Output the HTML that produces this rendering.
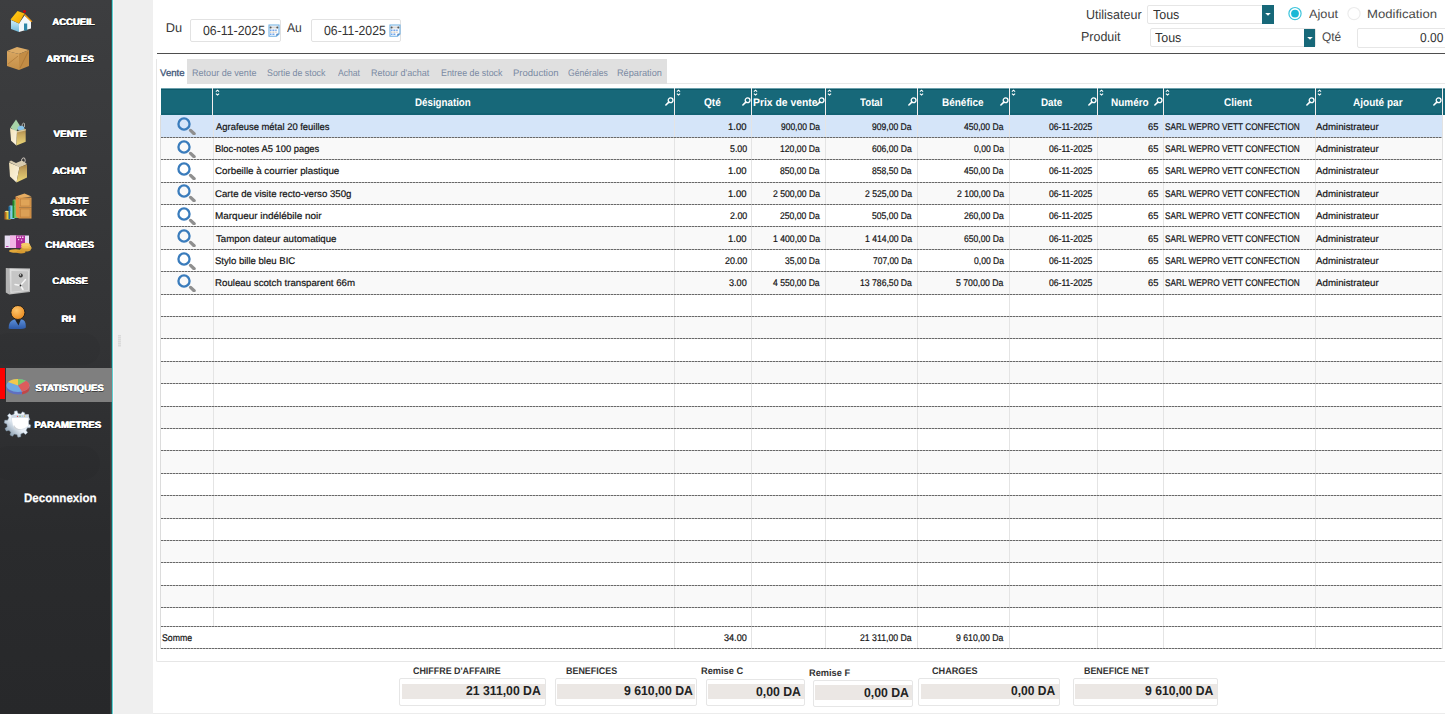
<!DOCTYPE html>
<html><head><meta charset="utf-8"><style>
html,body{margin:0;padding:0;}
body{width:1445px;height:714px;overflow:hidden;position:relative;background:#fff;font-family:"Liberation Sans", sans-serif;}
.t{position:absolute;white-space:nowrap;line-height:1;transform-origin:0 0;text-rendering:geometricPrecision;}
.dash{position:absolute;left:161px;width:1282px;height:1px;background:repeating-linear-gradient(90deg,#686868 0,#686868 2px,#b4b4b4 2px,#b4b4b4 3px);}
</style></head><body>
<div style="position:absolute;left:0;top:0;width:112px;height:714px;background:linear-gradient(180deg,#3d3e40 0%,#333436 45%,#2a2b2d 75%,#27282a 100%)"></div>
<div style="position:absolute;left:110px;top:0;width:1px;height:714px;background:#433838"></div>
<div style="position:absolute;left:111px;top:0;width:1px;height:714px;background:#235a5c"></div>
<div style="position:absolute;left:112px;top:0;width:1px;height:714px;background:#5fd2d4"></div>
<div style="position:absolute;left:113px;top:0;width:1px;height:714px;background:#fbf4f4"></div>
<div style="position:absolute;left:114px;top:0;width:39px;height:714px;background:#efefef"></div>
<div style="position:absolute;left:-8px;top:333px;width:108px;height:32px;border-radius:16px;background:rgba(0,0,0,0.03)"></div>
<div style="position:absolute;left:-8px;top:446px;width:108px;height:34px;border-radius:17px;background:rgba(0,0,0,0.03)"></div>
<div style="position:absolute;left:0;top:368px;width:5px;height:31px;background:#ff0000"></div>
<div style="position:absolute;left:6px;top:368px;width:105.5px;height:34px;background:#7f7f7f"></div>
<div style="position:absolute;left:118px;top:335px;width:3px;height:12px;background:repeating-linear-gradient(180deg,#dadada 0,#dadada 1px,#e4e4e4 1px,#e4e4e4 2px)"></div>
<svg style="position:absolute;left:0;top:0" width="112" height="460" viewBox="0 0 112 460">
<defs>
<linearGradient id="roof" x1="0" y1="0" x2="1" y2="1"><stop offset="0" stop-color="#ffd21a"/><stop offset="1" stop-color="#f5a000"/></linearGradient>
<linearGradient id="wallL" x1="0" y1="0" x2="0" y2="1"><stop offset="0" stop-color="#cfeefa"/><stop offset="1" stop-color="#6fb8d8"/></linearGradient>
<linearGradient id="crateF" x1="0" y1="0" x2="0" y2="1"><stop offset="0" stop-color="#d9a660"/><stop offset="1" stop-color="#c48f48"/></linearGradient>
<linearGradient id="bagL" x1="0" y1="0" x2="1" y2="0"><stop offset="0" stop-color="#f3ead0"/><stop offset="1" stop-color="#e2d4a6"/></linearGradient>
<linearGradient id="bagR" x1="0" y1="0" x2="0" y2="1"><stop offset="0" stop-color="#c8ad6a"/><stop offset="1" stop-color="#e3cf88"/></linearGradient>
<linearGradient id="safe" x1="0" y1="0" x2="1" y2="1"><stop offset="0" stop-color="#e2e2e2"/><stop offset="1" stop-color="#9a9a9a"/></linearGradient>
<radialGradient id="head" cx="0.4" cy="0.35" r="0.7"><stop offset="0" stop-color="#ffc56a"/><stop offset="1" stop-color="#e8891e"/></radialGradient>
<linearGradient id="body" x1="0" y1="0" x2="0" y2="1"><stop offset="0" stop-color="#5c8fd8"/><stop offset="1" stop-color="#2d5aa8"/></linearGradient>
<radialGradient id="coin" cx="0.5" cy="0.4" r="0.6"><stop offset="0" stop-color="#ffe08a"/><stop offset="1" stop-color="#d49a2a"/></radialGradient>
</defs>
<!-- ACCUEIL house -->
<g>
<polygon points="11,20 19,23.5 19,32 11,29" fill="url(#wallL)"/>
<polygon points="19,23.5 24.5,15.5 31,21 31,28.5 19,32" fill="#f2f7fa"/>
<rect x="24" y="23.5" width="3.2" height="7" fill="#2f86a8"/>
<polygon points="10.5,19.5 17.5,11 24.5,13.5 19,23.5" fill="url(#roof)"/>
<polygon points="24.5,13.5 32.5,21.5 31,22 24.5,15.5" fill="#f29a10"/>
<circle cx="24.5" cy="11.5" r="1.4" fill="#d40000"/>
</g>
<!-- ARTICLES crate -->
<g>
<polygon points="7,51 17,47 29,50 19,54" fill="#dcab66"/>
<polygon points="7,51 19,54 19,70 7,66" fill="url(#crateF)"/>
<polygon points="19,54 29,50 29,66 19,70" fill="#c28c45"/>
<line x1="8" y1="64" x2="18" y2="56" stroke="#b07a38" stroke-width="0.8"/>
<line x1="20" y1="68" x2="28" y2="52" stroke="#a87434" stroke-width="0.8"/>
</g>
<!-- VENTE bag -->
<g>
<defs>
<linearGradient id="bagR2" x1="0" y1="0" x2="0" y2="1"><stop offset="0" stop-color="#a88448"/><stop offset="0.35" stop-color="#c8a860"/><stop offset="1" stop-color="#ecd878"/></linearGradient>
<linearGradient id="bagL2" x1="0" y1="0" x2="1" y2="1"><stop offset="0" stop-color="#f2e2b8"/><stop offset="1" stop-color="#fbf4e4"/></linearGradient>
</defs>
<path d="M22 127 Q22 122 24.5 123.5 L24.5 127" fill="none" stroke="#b8b8b0" stroke-width="0.9"/>
<polygon points="10.5,127.5 16,119.5 19.8,125.5 16,132" fill="#a8d4a8"/>
<ellipse cx="21" cy="128.3" rx="3.4" ry="2.6" fill="#88c4ea"/>
<polygon points="10,128 17,131.2 16.4,145.5 11.1,140.8" fill="url(#bagL2)"/>
<polygon points="17,131.2 25.7,128.9 25.7,141.7 16.4,145.5" fill="url(#bagR2)"/>
<polygon points="17,131.2 25.7,128.9 25.7,130.5 17,132.5" fill="#d8c8a0"/>
</g>
<!-- ACHAT bag -->
<g>
<path d="M21.5 163 Q21 157 24.5 158 Q26 160 24.5 163" fill="none" stroke="#c8c0b8" stroke-width="1"/>
<polygon points="9,162 11,160.5 16,163 22,160.5 27,164 20,167.5" fill="#d8ccb0"/>
<polygon points="9,162.5 19.5,167 16.5,182.5 10,176.5" fill="url(#bagL2)"/>
<polygon points="19.5,167 27,164.5 27,177.5 16.5,182.5" fill="url(#bagR2)"/>
</g>
<!-- AJUSTE STOCK -->
<g>
<polygon points="4.5,212 6,210.8 11,211.2 10.5,212.5" fill="#f6e88a"/>
<rect x="4.5" y="212" width="1.8" height="7.5" fill="#b86a20"/>
<rect x="6.3" y="212" width="4.4" height="7.5" fill="#e8c838"/>
<polygon points="8.5,206.5 10,205.4 15,205.8 14.5,207" fill="#9ee0f8"/>
<rect x="8.5" y="206.5" width="1.8" height="12.5" fill="#1e6ea0"/>
<rect x="10.3" y="206.5" width="4.2" height="12.5" fill="#7ccbe8"/>
<polygon points="12.5,200.5 14,199.4 18.5,199.8 18,201" fill="#8ee07a"/>
<rect x="12.5" y="200.5" width="1.8" height="17.5" fill="#1e8a2a"/>
<rect x="14.3" y="200.5" width="3.9" height="17.5" fill="#78c868"/>
<polygon points="15.5,196.5 24.5,193.5 31.5,196.5 19,198.5" fill="#e6ad62"/>
<polygon points="15.5,196.5 19,198.5 19,218.5 16,216.5" fill="#e8903e"/>
<rect x="19" y="197.5" width="12.5" height="10" fill="#d99a4e"/>
<rect x="19" y="207.5" width="12.5" height="11" fill="#d4944a"/>
<rect x="20.5" y="199" width="9.5" height="7" fill="#dfa458" stroke="#b87a38" stroke-width="0.5"/>
<rect x="20.5" y="209" width="9.5" height="8" fill="#dba056" stroke="#b87a38" stroke-width="0.5"/>
</g>
<!-- CHARGES money -->
<g>
<rect x="4.7" y="235.5" width="24.3" height="12.5" fill="#e6dcf2"/>
<rect x="10" y="235.5" width="6" height="12.5" fill="#f2b4e6"/>
<rect x="16" y="235.5" width="9" height="12.5" fill="#b02c9c"/>
<g fill="#f4d6ee"><rect x="17" y="236.5" width="1.5" height="1.5"/><rect x="19.5" y="236.5" width="1.5" height="1.5"/><rect x="22" y="236.5" width="1.5" height="1.5"/><rect x="18" y="239" width="1.2" height="1.2"/><rect x="21" y="239.5" width="1.2" height="1.2"/></g>
<rect x="6" y="246" width="2.5" height="1" fill="#c040b0"/>
<ellipse cx="15.5" cy="251" rx="6.5" ry="1.8" fill="#e2a83a"/>
<ellipse cx="21" cy="252" rx="4.5" ry="1.4" fill="#d89a30"/>
<ellipse cx="25.5" cy="249.5" rx="5.5" ry="2" fill="#d8a038"/>
<ellipse cx="26" cy="246.5" rx="5" ry="2" fill="#f0c058"/>
<ellipse cx="25.5" cy="244.5" rx="4.5" ry="1.8" fill="#f6cc68"/>
<ellipse cx="30" cy="248" rx="1.8" ry="1" fill="#e8b448"/>
</g>
<!-- CAISSE safe -->
<g>
<defs><linearGradient id="safeF" x1="0" y1="0" x2="1" y2="1"><stop offset="0" stop-color="#e4e4e4"/><stop offset="1" stop-color="#a8a8a8"/></linearGradient></defs>
<polygon points="5.8,268 9.2,268.3 9.2,294.5 5.8,292.5" fill="#b4b4b4"/>
<polygon points="9.2,268.3 30,268.6 30,292 9.2,294.5" fill="url(#safeF)"/>
<polygon points="11,270.5 28.5,270.8 28.5,290.5 11,292.3" fill="#c6c6c6" stroke="#e8e8e8" stroke-width="0.6"/>
<circle cx="20.8" cy="275.4" r="2" fill="#3a3a3a"/>
<circle cx="20.4" cy="274.9" r="0.8" fill="#cfcfcf"/>
<path d="M15 284.5 L20.5 285.5 M20.5 285.5 L25.5 279.5 M20.5 285.5 L23 289.5" stroke="#f4f4f4" stroke-width="1.5" stroke-linecap="round"/>
<circle cx="20.5" cy="285.5" r="0.9" fill="#222"/>
</g>
<!-- RH person -->
<g>
<path d="M8.6 328.5 Q8.4 321 14 319.4 L22 319.4 Q25.8 320.2 25.8 326 L25.8 327.5 Q25 329 17 329 Q9 329 8.6 328.5 Z" fill="url(#body)"/>
<path d="M15 319.6 L18.5 325.5 L20.8 319.6 Z" fill="#202020"/>
<circle cx="17.9" cy="312.5" r="7" fill="url(#head)" stroke="#1a1a1a" stroke-width="0.9"/>
</g>
<!-- STATISTIQUES pie -->
<g>
<ellipse cx="18" cy="388" rx="11.5" ry="6.5" fill="#6070c0"/>
<path d="M18 386 L29.5 386 L29.5 388.5 A11.5 6.5 0 0 1 22 394.5 L22 392 Z" fill="#c04848"/>
<ellipse cx="18" cy="385.5" rx="11.5" ry="6.5" fill="#6fa8e0"/>
<path d="M18 385.5 L8 382 A11.5 6.5 0 0 1 18 379 Z" fill="#f2c84a"/>
<path d="M18 385.5 L18 379 A11.5 6.5 0 0 1 26 380.8 Z" fill="#7cc866"/>
<path d="M18 385.5 L26 380.8 A11.5 6.5 0 0 1 22 391.6 Z" fill="#dd5c5c"/>
</g>
<!-- PARAMETRES gear -->
<g>
<defs><linearGradient id="gearG" x1="1" y1="0" x2="0" y2="1"><stop offset="0" stop-color="#ffffff"/><stop offset="0.55" stop-color="#e6eef6"/><stop offset="1" stop-color="#60788e"/></linearGradient></defs>
<path d="M28.10 424.00 L30.66 424.99 L30.18 427.68 L27.43 427.72 L26.08 430.23 L27.56 432.54 L25.59 434.43 L23.35 432.84 L20.78 434.08 L20.62 436.83 L17.91 437.19 L17.03 434.59 L14.22 434.08 L12.49 436.21 L10.08 434.92 L10.90 432.29 L8.92 430.23 L6.27 430.93 L5.08 428.47 L7.28 426.83 L6.90 424.00 L4.34 423.01 L4.82 420.32 L7.57 420.28 L8.92 417.77 L7.44 415.46 L9.41 413.57 L11.65 415.16 L14.22 413.92 L14.38 411.17 L17.09 410.81 L17.97 413.41 L20.78 413.92 L22.51 411.79 L24.92 413.08 L24.10 415.71 L26.08 417.77 L28.73 417.07 L29.92 419.53 L27.72 421.17 Z" fill="url(#gearG)" stroke="#8aa0b4" stroke-width="0.5"/>
<path d="M11.5 415.5 L28.5 414.5 L28.5 426 Q21 432 14.5 428 Q12 425 11.5 420 Z" fill="#ffffff" stroke="#c8d2dc" stroke-width="0.5"/>
<path d="M14 425 Q16 429 21 429.5 Q17 431 14 428 Z" fill="#d0d4d8"/>
<rect x="11.8" y="415" width="16.5" height="2.8" fill="#cdd9e6"/>
<circle cx="17.5" cy="416.4" r="0.7" fill="#e05050"/><circle cx="20" cy="416.3" r="0.7" fill="#70c070"/><circle cx="22.5" cy="416.2" r="0.7" fill="#b0c8e0"/><circle cx="24.5" cy="416.1" r="0.7" fill="#e8c040"/>
</g>
</svg>

<!-- top inputs -->
<div style="position:absolute;left:190px;top:19px;width:91px;height:22.5px;border:1px solid #e2e2e2;border-radius:2px;box-sizing:border-box"></div>
<div style="position:absolute;left:311px;top:19px;width:90px;height:22.5px;border:1px solid #e2e2e2;border-radius:2px;box-sizing:border-box"></div>
<svg style="position:absolute;left:267.8px;top:23.5px" width="12" height="13" viewBox="0 0 12 13"><path d="M1 1 H11 V10 L8.5 12.2 H1 Z" fill="#fbfdff" stroke="#6fb0e2" stroke-width="1.1"/><rect x="2" y="2.4" width="8" height="2" fill="#d8d8d8"/><circle cx="2.6" cy="3.4" r="1" fill="#555"/><circle cx="9.3" cy="3.4" r="1" fill="#555"/><g fill="#4d8fe6"><rect x="2" y="5.6" width="1.5" height="1.2"/><rect x="4.4" y="5.6" width="2" height="1.2"/><rect x="7.2" y="5.6" width="1.5" height="1.2"/><rect x="2" y="9.6" width="1.5" height="1.2"/><rect x="4.4" y="9.6" width="2" height="1.2"/></g><g fill="#c9c2b8"><rect x="2" y="7.6" width="1.5" height="1.1"/><rect x="4.4" y="7.6" width="2" height="1.1"/><rect x="7.2" y="7.6" width="1.5" height="1.1"/></g><path d="M8 12 L8.6 9.8 L11 9.6 Z" fill="#3b73b8"/></svg>
<svg style="position:absolute;left:388.5px;top:23.5px" width="12" height="13" viewBox="0 0 12 13"><path d="M1 1 H11 V10 L8.5 12.2 H1 Z" fill="#fbfdff" stroke="#6fb0e2" stroke-width="1.1"/><rect x="2" y="2.4" width="8" height="2" fill="#d8d8d8"/><circle cx="2.6" cy="3.4" r="1" fill="#555"/><circle cx="9.3" cy="3.4" r="1" fill="#555"/><g fill="#4d8fe6"><rect x="2" y="5.6" width="1.5" height="1.2"/><rect x="4.4" y="5.6" width="2" height="1.2"/><rect x="7.2" y="5.6" width="1.5" height="1.2"/><rect x="2" y="9.6" width="1.5" height="1.2"/><rect x="4.4" y="9.6" width="2" height="1.2"/></g><g fill="#c9c2b8"><rect x="2" y="7.6" width="1.5" height="1.1"/><rect x="4.4" y="7.6" width="2" height="1.1"/><rect x="7.2" y="7.6" width="1.5" height="1.1"/></g><path d="M8 12 L8.6 9.8 L11 9.6 Z" fill="#3b73b8"/></svg>
<div style="position:absolute;left:1147px;top:5px;width:127px;height:19px;border:1px solid #e6e6e6;border-radius:2px;box-sizing:border-box"></div>
<div style="position:absolute;left:1262.3px;top:5.4px;width:11.5px;height:18.3px;background:#176879"></div>
<svg style="position:absolute;left:1264px;top:12px" width="8" height="5" viewBox="0 0 8 5"><path d="M1.2 1 L6.8 1 L4 3.8 Z" fill="#fff"/></svg>
<div style="position:absolute;left:1150.3px;top:28.3px;width:166px;height:19px;border:1px solid #e6e6e6;border-radius:2px;box-sizing:border-box"></div>
<div style="position:absolute;left:1304.2px;top:28.8px;width:11.2px;height:18.2px;background:#176879"></div>
<svg style="position:absolute;left:1305.8px;top:35.5px" width="8" height="5" viewBox="0 0 8 5"><path d="M1.2 1 L6.8 1 L4 3.8 Z" fill="#fff"/></svg>
<svg style="position:absolute;left:1287px;top:5.5px" width="16" height="16" viewBox="0 0 16 16"><circle cx="8" cy="7.6" r="6.1" fill="#fff" stroke="#3cc4dc" stroke-width="1.2"/><circle cx="8" cy="7.6" r="3.9" fill="#1ab8d6"/></svg>
<svg style="position:absolute;left:1345.5px;top:5.5px" width="16" height="16" viewBox="0 0 16 16"><circle cx="8" cy="7.6" r="6.1" fill="#fff" stroke="#ececec" stroke-width="1.2"/></svg>
<div style="position:absolute;left:1357.3px;top:28.4px;width:100px;height:19.2px;border:1px solid #e6e6e6;border-radius:2px;box-sizing:border-box"></div>
<div style="position:absolute;left:157px;top:52.6px;width:1288px;height:1.4px;background:#4e4e4e"></div>
<!-- tab panel -->
<div style="position:absolute;left:156px;top:59px;width:1300px;height:602.5px;border-left:1px solid #e6e6e6;border-bottom:1px solid #e6e6e6;box-sizing:border-box;border-radius:0 0 0 2px"></div>
<div style="position:absolute;left:187.4px;top:59px;width:479.3px;height:24.7px;background:#e0e0e0"></div>
<div style="position:absolute;left:666.6px;top:83.2px;width:800px;height:1px;background:#e8e8e8"></div>
<div style="position:absolute;left:161px;top:88px;width:1284px;height:27px;background:#176879;border-top:1px solid #6a9fab;box-sizing:border-box"></div>
<div style="position:absolute;left:161px;top:89px;width:1284px;height:1px;background:#0d5868"></div>
<div style="position:absolute;left:161px;top:113px;width:1284px;height:1.5px;background:#126273"></div>
<div style="position:absolute;left:212px;top:87.5px;width:1px;height:27.5px;background:#f4eeee"></div>
<div style="position:absolute;left:674px;top:87.5px;width:1px;height:27.5px;background:#f4eeee"></div>
<div style="position:absolute;left:751px;top:87.5px;width:1px;height:27.5px;background:#f4eeee"></div>
<div style="position:absolute;left:825px;top:87.5px;width:1px;height:27.5px;background:#f4eeee"></div>
<div style="position:absolute;left:917px;top:87.5px;width:1px;height:27.5px;background:#f4eeee"></div>
<div style="position:absolute;left:1009px;top:87.5px;width:1px;height:27.5px;background:#f4eeee"></div>
<div style="position:absolute;left:1097px;top:87.5px;width:1px;height:27.5px;background:#f4eeee"></div>
<div style="position:absolute;left:1163px;top:87.5px;width:1px;height:27.5px;background:#f4eeee"></div>
<div style="position:absolute;left:1315px;top:87.5px;width:1px;height:27.5px;background:#f4eeee"></div>
<div style="position:absolute;left:1442px;top:87.5px;width:1px;height:27.5px;background:#f4eeee"></div>
<div style="position:absolute;left:161px;top:115px;width:1284px;height:1px;background:#fff"></div>
<div style="position:absolute;left:161px;top:115.00px;width:1282px;height:22.40px;background:#d5e5f9"></div>
<div style="position:absolute;left:161px;top:137.40px;width:1282px;height:22.40px;background:#f9f9f9"></div>
<div style="position:absolute;left:161px;top:159.80px;width:1282px;height:22.40px;background:#ffffff"></div>
<div style="position:absolute;left:161px;top:182.20px;width:1282px;height:22.40px;background:#f9f9f9"></div>
<div style="position:absolute;left:161px;top:204.60px;width:1282px;height:22.40px;background:#ffffff"></div>
<div style="position:absolute;left:161px;top:227.00px;width:1282px;height:22.40px;background:#f9f9f9"></div>
<div style="position:absolute;left:161px;top:249.40px;width:1282px;height:22.40px;background:#ffffff"></div>
<div style="position:absolute;left:161px;top:271.80px;width:1282px;height:22.40px;background:#f9f9f9"></div>
<div style="position:absolute;left:161px;top:294.20px;width:1282px;height:22.40px;background:#ffffff"></div>
<div style="position:absolute;left:161px;top:316.60px;width:1282px;height:22.40px;background:#f9f9f9"></div>
<div style="position:absolute;left:161px;top:339.00px;width:1282px;height:22.40px;background:#ffffff"></div>
<div style="position:absolute;left:161px;top:361.40px;width:1282px;height:22.40px;background:#f9f9f9"></div>
<div style="position:absolute;left:161px;top:383.80px;width:1282px;height:22.40px;background:#ffffff"></div>
<div style="position:absolute;left:161px;top:406.20px;width:1282px;height:22.40px;background:#f9f9f9"></div>
<div style="position:absolute;left:161px;top:428.60px;width:1282px;height:22.40px;background:#ffffff"></div>
<div style="position:absolute;left:161px;top:451.00px;width:1282px;height:22.40px;background:#f9f9f9"></div>
<div style="position:absolute;left:161px;top:473.40px;width:1282px;height:22.40px;background:#ffffff"></div>
<div style="position:absolute;left:161px;top:495.80px;width:1282px;height:22.40px;background:#f9f9f9"></div>
<div style="position:absolute;left:161px;top:518.20px;width:1282px;height:22.40px;background:#ffffff"></div>
<div style="position:absolute;left:161px;top:540.60px;width:1282px;height:22.40px;background:#f9f9f9"></div>
<div style="position:absolute;left:161px;top:563.00px;width:1282px;height:22.40px;background:#ffffff"></div>
<div style="position:absolute;left:161px;top:585.40px;width:1282px;height:22.40px;background:#f9f9f9"></div>
<div style="position:absolute;left:161px;top:607.80px;width:1282px;height:18.60px;background:#ffffff"></div>
<div style="position:absolute;left:212.5px;top:115px;width:1px;height:511.4px;background:#e4e4e4"></div>
<div style="position:absolute;left:674.0px;top:115px;width:1px;height:511.4px;background:#e4e4e4"></div>
<div style="position:absolute;left:751.0px;top:115px;width:1px;height:511.4px;background:#e4e4e4"></div>
<div style="position:absolute;left:825.0px;top:115px;width:1px;height:511.4px;background:#e4e4e4"></div>
<div style="position:absolute;left:917.0px;top:115px;width:1px;height:511.4px;background:#e4e4e4"></div>
<div style="position:absolute;left:1009.0px;top:115px;width:1px;height:511.4px;background:#e4e4e4"></div>
<div style="position:absolute;left:1097.0px;top:115px;width:1px;height:511.4px;background:#e4e4e4"></div>
<div style="position:absolute;left:1163.0px;top:115px;width:1px;height:511.4px;background:#e4e4e4"></div>
<div style="position:absolute;left:1315.0px;top:115px;width:1px;height:511.4px;background:#e4e4e4"></div>
<div class="dash" style="top:136.80px"></div>
<div class="dash" style="top:159.20px"></div>
<div class="dash" style="top:181.60px"></div>
<div class="dash" style="top:204.00px"></div>
<div class="dash" style="top:226.40px"></div>
<div class="dash" style="top:248.80px"></div>
<div class="dash" style="top:271.20px"></div>
<div class="dash" style="top:293.60px"></div>
<div class="dash" style="top:316.00px"></div>
<div class="dash" style="top:338.40px"></div>
<div class="dash" style="top:360.80px"></div>
<div class="dash" style="top:383.20px"></div>
<div class="dash" style="top:405.60px"></div>
<div class="dash" style="top:428.00px"></div>
<div class="dash" style="top:450.40px"></div>
<div class="dash" style="top:472.80px"></div>
<div class="dash" style="top:495.20px"></div>
<div class="dash" style="top:517.60px"></div>
<div class="dash" style="top:540.00px"></div>
<div class="dash" style="top:562.40px"></div>
<div class="dash" style="top:584.80px"></div>
<div class="dash" style="top:607.20px"></div>
<div class="dash" style="top:625.80px"></div>
<div style="position:absolute;left:161px;top:626.40px;width:1282px;height:22.4px;background:#fff"></div>
<div style="position:absolute;left:674.0px;top:626.4px;width:1px;height:22.4px;background:#e4e4e4"></div>
<div style="position:absolute;left:751.0px;top:626.4px;width:1px;height:22.4px;background:#e4e4e4"></div>
<div style="position:absolute;left:825.0px;top:626.4px;width:1px;height:22.4px;background:#e4e4e4"></div>
<div style="position:absolute;left:917.0px;top:626.4px;width:1px;height:22.4px;background:#e4e4e4"></div>
<div style="position:absolute;left:1009.0px;top:626.4px;width:1px;height:22.4px;background:#e4e4e4"></div>
<div style="position:absolute;left:1097.0px;top:626.4px;width:1px;height:22.4px;background:#e4e4e4"></div>
<div style="position:absolute;left:1163.0px;top:626.4px;width:1px;height:22.4px;background:#e4e4e4"></div>
<div style="position:absolute;left:1315.0px;top:626.4px;width:1px;height:22.4px;background:#e4e4e4"></div>
<div class="dash" style="top:625.80px"></div>
<div class="dash" style="top:648.20px"></div>
<div style="position:absolute;left:160px;top:115px;width:1px;height:533.8px;background:#dcdcdc"></div>
<div style="position:absolute;left:1442px;top:115px;width:1px;height:533.8px;background:#e2e2e2"></div>
<svg style="position:absolute;left:175px;top:115.20px" width="24" height="20" viewBox="0 0 24 20"><circle cx="9" cy="9" r="5.55" fill="none" stroke="#3a7cbc" stroke-width="2.3"/><line x1="15.6" y1="15.4" x2="19.1" y2="18.7" stroke="#8f8f8f" stroke-width="3.3" stroke-linecap="round"/></svg>
<svg style="position:absolute;left:175px;top:137.60px" width="24" height="20" viewBox="0 0 24 20"><circle cx="9" cy="9" r="5.55" fill="none" stroke="#3a7cbc" stroke-width="2.3"/><line x1="15.6" y1="15.4" x2="19.1" y2="18.7" stroke="#8f8f8f" stroke-width="3.3" stroke-linecap="round"/></svg>
<svg style="position:absolute;left:175px;top:160.00px" width="24" height="20" viewBox="0 0 24 20"><circle cx="9" cy="9" r="5.55" fill="none" stroke="#3a7cbc" stroke-width="2.3"/><line x1="15.6" y1="15.4" x2="19.1" y2="18.7" stroke="#8f8f8f" stroke-width="3.3" stroke-linecap="round"/></svg>
<svg style="position:absolute;left:175px;top:182.40px" width="24" height="20" viewBox="0 0 24 20"><circle cx="9" cy="9" r="5.55" fill="none" stroke="#3a7cbc" stroke-width="2.3"/><line x1="15.6" y1="15.4" x2="19.1" y2="18.7" stroke="#8f8f8f" stroke-width="3.3" stroke-linecap="round"/></svg>
<svg style="position:absolute;left:175px;top:204.80px" width="24" height="20" viewBox="0 0 24 20"><circle cx="9" cy="9" r="5.55" fill="none" stroke="#3a7cbc" stroke-width="2.3"/><line x1="15.6" y1="15.4" x2="19.1" y2="18.7" stroke="#8f8f8f" stroke-width="3.3" stroke-linecap="round"/></svg>
<svg style="position:absolute;left:175px;top:227.20px" width="24" height="20" viewBox="0 0 24 20"><circle cx="9" cy="9" r="5.55" fill="none" stroke="#3a7cbc" stroke-width="2.3"/><line x1="15.6" y1="15.4" x2="19.1" y2="18.7" stroke="#8f8f8f" stroke-width="3.3" stroke-linecap="round"/></svg>
<svg style="position:absolute;left:175px;top:249.60px" width="24" height="20" viewBox="0 0 24 20"><circle cx="9" cy="9" r="5.55" fill="none" stroke="#3a7cbc" stroke-width="2.3"/><line x1="15.6" y1="15.4" x2="19.1" y2="18.7" stroke="#8f8f8f" stroke-width="3.3" stroke-linecap="round"/></svg>
<svg style="position:absolute;left:175px;top:272.00px" width="24" height="20" viewBox="0 0 24 20"><circle cx="9" cy="9" r="5.55" fill="none" stroke="#3a7cbc" stroke-width="2.3"/><line x1="15.6" y1="15.4" x2="19.1" y2="18.7" stroke="#8f8f8f" stroke-width="3.3" stroke-linecap="round"/></svg>
<svg style="position:absolute;left:214.5px;top:88.5px" width="6" height="8" viewBox="0 0 6 8"><path d="M0.9 2.6 L2.5 1.1 L4.1 2.6 M0.9 4.6 L2.5 6.1 L4.1 4.6" fill="none" stroke="#fff" stroke-width="1.05"/></svg>
<svg style="position:absolute;left:676.0px;top:88.5px" width="6" height="8" viewBox="0 0 6 8"><path d="M0.9 2.6 L2.5 1.1 L4.1 2.6 M0.9 4.6 L2.5 6.1 L4.1 4.6" fill="none" stroke="#fff" stroke-width="1.05"/></svg>
<svg style="position:absolute;left:753.0px;top:88.5px" width="6" height="8" viewBox="0 0 6 8"><path d="M0.9 2.6 L2.5 1.1 L4.1 2.6 M0.9 4.6 L2.5 6.1 L4.1 4.6" fill="none" stroke="#fff" stroke-width="1.05"/></svg>
<svg style="position:absolute;left:827.0px;top:88.5px" width="6" height="8" viewBox="0 0 6 8"><path d="M0.9 2.6 L2.5 1.1 L4.1 2.6 M0.9 4.6 L2.5 6.1 L4.1 4.6" fill="none" stroke="#fff" stroke-width="1.05"/></svg>
<svg style="position:absolute;left:919.0px;top:88.5px" width="6" height="8" viewBox="0 0 6 8"><path d="M0.9 2.6 L2.5 1.1 L4.1 2.6 M0.9 4.6 L2.5 6.1 L4.1 4.6" fill="none" stroke="#fff" stroke-width="1.05"/></svg>
<svg style="position:absolute;left:1011.0px;top:88.5px" width="6" height="8" viewBox="0 0 6 8"><path d="M0.9 2.6 L2.5 1.1 L4.1 2.6 M0.9 4.6 L2.5 6.1 L4.1 4.6" fill="none" stroke="#fff" stroke-width="1.05"/></svg>
<svg style="position:absolute;left:1099.0px;top:88.5px" width="6" height="8" viewBox="0 0 6 8"><path d="M0.9 2.6 L2.5 1.1 L4.1 2.6 M0.9 4.6 L2.5 6.1 L4.1 4.6" fill="none" stroke="#fff" stroke-width="1.05"/></svg>
<svg style="position:absolute;left:1165.0px;top:88.5px" width="6" height="8" viewBox="0 0 6 8"><path d="M0.9 2.6 L2.5 1.1 L4.1 2.6 M0.9 4.6 L2.5 6.1 L4.1 4.6" fill="none" stroke="#fff" stroke-width="1.05"/></svg>
<svg style="position:absolute;left:1317.0px;top:88.5px" width="6" height="8" viewBox="0 0 6 8"><path d="M0.9 2.6 L2.5 1.1 L4.1 2.6 M0.9 4.6 L2.5 6.1 L4.1 4.6" fill="none" stroke="#fff" stroke-width="1.05"/></svg>
<svg style="position:absolute;left:665.0px;top:97px" width="9" height="9" viewBox="0 0 9 9"><circle cx="5.6" cy="3.3" r="2.4" fill="none" stroke="#fff" stroke-width="1.3"/><line x1="3.8" y1="5.1" x2="0.9" y2="8" stroke="#fff" stroke-width="1.6" stroke-linecap="round"/></svg>
<svg style="position:absolute;left:742.0px;top:97px" width="9" height="9" viewBox="0 0 9 9"><circle cx="5.6" cy="3.3" r="2.4" fill="none" stroke="#fff" stroke-width="1.3"/><line x1="3.8" y1="5.1" x2="0.9" y2="8" stroke="#fff" stroke-width="1.6" stroke-linecap="round"/></svg>
<svg style="position:absolute;left:816.0px;top:97px" width="9" height="9" viewBox="0 0 9 9"><circle cx="5.6" cy="3.3" r="2.4" fill="none" stroke="#fff" stroke-width="1.3"/><line x1="3.8" y1="5.1" x2="0.9" y2="8" stroke="#fff" stroke-width="1.6" stroke-linecap="round"/></svg>
<svg style="position:absolute;left:908.0px;top:97px" width="9" height="9" viewBox="0 0 9 9"><circle cx="5.6" cy="3.3" r="2.4" fill="none" stroke="#fff" stroke-width="1.3"/><line x1="3.8" y1="5.1" x2="0.9" y2="8" stroke="#fff" stroke-width="1.6" stroke-linecap="round"/></svg>
<svg style="position:absolute;left:1000.0px;top:97px" width="9" height="9" viewBox="0 0 9 9"><circle cx="5.6" cy="3.3" r="2.4" fill="none" stroke="#fff" stroke-width="1.3"/><line x1="3.8" y1="5.1" x2="0.9" y2="8" stroke="#fff" stroke-width="1.6" stroke-linecap="round"/></svg>
<svg style="position:absolute;left:1088.0px;top:97px" width="9" height="9" viewBox="0 0 9 9"><circle cx="5.6" cy="3.3" r="2.4" fill="none" stroke="#fff" stroke-width="1.3"/><line x1="3.8" y1="5.1" x2="0.9" y2="8" stroke="#fff" stroke-width="1.6" stroke-linecap="round"/></svg>
<svg style="position:absolute;left:1154.0px;top:97px" width="9" height="9" viewBox="0 0 9 9"><circle cx="5.6" cy="3.3" r="2.4" fill="none" stroke="#fff" stroke-width="1.3"/><line x1="3.8" y1="5.1" x2="0.9" y2="8" stroke="#fff" stroke-width="1.6" stroke-linecap="round"/></svg>
<svg style="position:absolute;left:1306.0px;top:97px" width="9" height="9" viewBox="0 0 9 9"><circle cx="5.6" cy="3.3" r="2.4" fill="none" stroke="#fff" stroke-width="1.3"/><line x1="3.8" y1="5.1" x2="0.9" y2="8" stroke="#fff" stroke-width="1.6" stroke-linecap="round"/></svg>
<svg style="position:absolute;left:1433.0px;top:97px" width="9" height="9" viewBox="0 0 9 9"><circle cx="5.6" cy="3.3" r="2.4" fill="none" stroke="#fff" stroke-width="1.3"/><line x1="3.8" y1="5.1" x2="0.9" y2="8" stroke="#fff" stroke-width="1.6" stroke-linecap="round"/></svg>
<!-- summary panel -->
<div style="position:absolute;left:153px;top:712.6px;width:1300px;height:1px;background:#ececec"></div>
<div style="position:absolute;left:399.4px;top:678.3px;width:146.5px;height:27.3px;border:1px solid #e6e6e6;box-sizing:border-box;border-radius:2px"></div>
<div style="position:absolute;left:401.8px;top:683.9px;width:143.1px;height:15.2px;background:#ebe7e4"></div>
<div style="position:absolute;left:554.5px;top:678.3px;width:142.0px;height:27.3px;border:1px solid #e6e6e6;box-sizing:border-box;border-radius:2px"></div>
<div style="position:absolute;left:556.9px;top:683.9px;width:138.6px;height:15.2px;background:#ebe7e4"></div>
<div style="position:absolute;left:705.6px;top:678.6px;width:99.8px;height:27.0px;border:1px solid #e6e6e6;box-sizing:border-box;border-radius:2px"></div>
<div style="position:absolute;left:708.0px;top:684.2px;width:96.4px;height:15.2px;background:#ebe7e4"></div>
<div style="position:absolute;left:813.0px;top:679.7px;width:99.9px;height:27.1px;border:1px solid #e6e6e6;box-sizing:border-box;border-radius:2px"></div>
<div style="position:absolute;left:815.4px;top:685.3px;width:96.5px;height:15.2px;background:#ebe7e4"></div>
<div style="position:absolute;left:918.4px;top:678.3px;width:141.5px;height:27.3px;border:1px solid #e6e6e6;box-sizing:border-box;border-radius:2px"></div>
<div style="position:absolute;left:920.8px;top:683.9px;width:138.1px;height:15.2px;background:#ebe7e4"></div>
<div style="position:absolute;left:1072.8px;top:678.3px;width:145.0px;height:27.3px;border:1px solid #e6e6e6;box-sizing:border-box;border-radius:2px"></div>
<div style="position:absolute;left:1075.2px;top:683.9px;width:141.6px;height:15.2px;background:#ebe7e4"></div>
<span class="t" style="left:51.81px;top:17.00px;font-size:9.4px;font-weight:700;color:#ffffff;transform:scale(1.0147,1.0000);text-shadow:0.6px 0 0 #fff, 0.6px 0.3px 0 #fff, 0 0 1px #000, 1px 1px 0 rgba(0,0,0,.45);">ACCUEIL</span>
<span class="t" style="left:45.81px;top:54.00px;font-size:9.4px;font-weight:700;color:#ffffff;transform:scale(1.0115,1.0000);text-shadow:0.6px 0 0 #fff, 0.6px 0.3px 0 #fff, 0 0 1px #000, 1px 1px 0 rgba(0,0,0,.45);">ARTICLES</span>
<span class="t" style="left:53.00px;top:129.00px;font-size:9.4px;font-weight:700;color:#ffffff;transform:scale(1.0648,1.0000);text-shadow:0.6px 0 0 #fff, 0.6px 0.3px 0 #fff, 0 0 1px #000, 1px 1px 0 rgba(0,0,0,.45);">VENTE</span>
<span class="t" style="left:51.80px;top:166.00px;font-size:9.4px;font-weight:700;color:#ffffff;transform:scale(1.0624,1.0000);text-shadow:0.6px 0 0 #fff, 0.6px 0.3px 0 #fff, 0 0 1px #000, 1px 1px 0 rgba(0,0,0,.45);">ACHAT</span>
<span class="t" style="left:49.80px;top:196.00px;font-size:9.4px;font-weight:700;color:#ffffff;transform:scale(1.0397,1.0000);text-shadow:0.6px 0 0 #fff, 0.6px 0.3px 0 #fff, 0 0 1px #000, 1px 1px 0 rgba(0,0,0,.45);">AJUSTE</span>
<span class="t" style="left:51.80px;top:208.00px;font-size:9.4px;font-weight:700;color:#ffffff;transform:scale(1.0455,1.0000);text-shadow:0.6px 0 0 #fff, 0.6px 0.3px 0 #fff, 0 0 1px #000, 1px 1px 0 rgba(0,0,0,.45);">STOCK</span>
<span class="t" style="left:44.61px;top:240.00px;font-size:9.4px;font-weight:700;color:#ffffff;transform:scale(1.0371,1.0000);text-shadow:0.6px 0 0 #fff, 0.6px 0.3px 0 #fff, 0 0 1px #000, 1px 1px 0 rgba(0,0,0,.45);">CHARGES</span>
<span class="t" style="left:51.62px;top:276.00px;font-size:9.4px;font-weight:700;color:#ffffff;transform:scale(1.0212,1.0000);text-shadow:0.6px 0 0 #fff, 0.6px 0.3px 0 #fff, 0 0 1px #000, 1px 1px 0 rgba(0,0,0,.45);">CAISSE</span>
<span class="t" style="left:61.41px;top:314.00px;font-size:9.4px;font-weight:700;color:#ffffff;transform:scale(1.0460,1.0000);text-shadow:0.6px 0 0 #fff, 0.6px 0.3px 0 #fff, 0 0 1px #000, 1px 1px 0 rgba(0,0,0,.45);">RH</span>
<span class="t" style="left:34.81px;top:383.00px;font-size:9.4px;font-weight:700;color:#ffffff;transform:scale(1.0228,1.0000);text-shadow:0.6px 0 0 #fff, 0.6px 0.3px 0 #fff, 0 0 1px #000, 1px 1px 0 rgba(0,0,0,.45);">STATISTIQUES</span>
<span class="t" style="left:34.42px;top:420.00px;font-size:9.4px;font-weight:700;color:#ffffff;transform:scale(1.0281,1.0000);text-shadow:0.6px 0 0 #fff, 0.6px 0.3px 0 #fff, 0 0 1px #000, 1px 1px 0 rgba(0,0,0,.45);">PARAMETRES</span>
<span class="t" style="left:24.11px;top:492.00px;font-size:12px;font-weight:700;color:#ffffff;transform:scale(0.9635,1.0000);-webkit-text-stroke:0.3px #fff;text-shadow:0 0 1px #000;">Deconnexion</span>
<span class="t" style="left:165.78px;top:22.00px;font-size:12.8px;font-weight:400;color:#3a3a3a;">Du</span>
<span class="t" style="left:203.23px;top:24.00px;font-size:13.3px;font-weight:400;color:#333;transform:scale(0.9250,1.0000);">06-11-2025</span>
<span class="t" style="left:287.00px;top:22.00px;font-size:12.8px;font-weight:400;color:#3a3a3a;transform:scale(0.9453,1.0000);">Au</span>
<span class="t" style="left:323.63px;top:24.00px;font-size:13.3px;font-weight:400;color:#333;transform:scale(0.9219,1.0000);">06-11-2025</span>
<span class="t" style="left:1085.73px;top:8.00px;font-size:13px;font-weight:400;color:#3a3a3a;transform:scale(0.9609,1.0000);">Utilisateur</span>
<span class="t" style="left:1152.55px;top:8.00px;font-size:13px;font-weight:400;color:#333;transform:scale(0.9586,1.0000);">Tous</span>
<span class="t" style="left:1080.50px;top:30.00px;font-size:13px;font-weight:400;color:#3a3a3a;transform:scale(0.9582,1.0000);">Produit</span>
<span class="t" style="left:1154.95px;top:31.00px;font-size:13px;font-weight:400;color:#333;transform:scale(0.9586,1.0000);">Tous</span>
<span class="t" style="left:1309.30px;top:8.00px;font-size:12px;font-weight:400;color:#4a4a4a;transform:scale(1.0629,1.0000);">Ajout</span>
<span class="t" style="left:1367.15px;top:8.00px;font-size:12px;font-weight:400;color:#4a4a4a;transform:scale(1.0930,1.0000);">Modification</span>
<span class="t" style="left:1322.23px;top:31.00px;font-size:12.5px;font-weight:400;color:#4a4a4a;transform:scale(0.9481,1.0000);">Qté</span>
<span class="t" style="left:1419.64px;top:31.00px;font-size:13px;font-weight:400;color:#333;transform:scale(0.9206,1.0000);">0.00</span>
<span class="t" style="left:160.30px;top:69.00px;font-size:9.5px;font-weight:400;color:#44597a;transform:scale(1.0143,1.0000);-webkit-text-stroke:0.3px #44597a;">Vente</span>
<span class="t" style="left:192.28px;top:69.00px;font-size:9.5px;font-weight:400;color:#7a8aa3;transform:scale(0.9534,1.0000);">Retour de vente</span>
<span class="t" style="left:267.25px;top:69.00px;font-size:9.5px;font-weight:400;color:#7a8aa3;transform:scale(0.9289,1.0000);">Sortie de stock</span>
<span class="t" style="left:337.90px;top:69.00px;font-size:9.5px;font-weight:400;color:#7a8aa3;transform:scale(0.9049,1.0000);">Achat</span>
<span class="t" style="left:370.78px;top:69.00px;font-size:9.5px;font-weight:400;color:#7a8aa3;transform:scale(0.9465,1.0000);">Retour d'achat</span>
<span class="t" style="left:441.09px;top:69.00px;font-size:9.5px;font-weight:400;color:#7a8aa3;transform:scale(0.9305,1.0000);">Entree de stock</span>
<span class="t" style="left:513.04px;top:69.00px;font-size:9.5px;font-weight:400;color:#7a8aa3;transform:scale(1.0017,1.0000);">Production</span>
<span class="t" style="left:567.97px;top:69.00px;font-size:9.5px;font-weight:400;color:#7a8aa3;transform:scale(0.9078,1.0000);">Générales</span>
<span class="t" style="left:616.87px;top:69.00px;font-size:9.5px;font-weight:400;color:#7a8aa3;transform:scale(0.9650,1.0000);">Réparation</span>
<span class="t" style="left:415.02px;top:98.00px;font-size:11px;font-weight:700;color:#ffffff;transform:scale(0.8861,1.0000);">Désignation</span>
<span class="t" style="left:703.80px;top:98.00px;font-size:11px;font-weight:700;color:#ffffff;transform:scale(0.9200,1.0000);">Qté</span>
<span class="t" style="left:752.98px;top:98.00px;font-size:11px;font-weight:700;color:#ffffff;transform:scale(0.9418,1.0000);">Prix de vente</span>
<span class="t" style="left:860.20px;top:98.00px;font-size:11px;font-weight:700;color:#ffffff;transform:scale(0.8820,1.0000);">Total</span>
<span class="t" style="left:942.00px;top:98.00px;font-size:11px;font-weight:700;color:#ffffff;transform:scale(0.9064,1.0000);">Bénéfice</span>
<span class="t" style="left:1041.31px;top:98.00px;font-size:11px;font-weight:700;color:#ffffff;transform:scale(0.8954,1.0000);">Date</span>
<span class="t" style="left:1110.60px;top:98.00px;font-size:11px;font-weight:700;color:#ffffff;transform:scale(0.9072,1.0000);">Numéro</span>
<span class="t" style="left:1224.30px;top:98.00px;font-size:11px;font-weight:700;color:#ffffff;transform:scale(0.9108,1.0000);">Client</span>
<span class="t" style="left:1353.10px;top:98.00px;font-size:11px;font-weight:700;color:#ffffff;transform:scale(0.9117,1.0000);">Ajouté par</span>
<span class="t" style="left:215.80px;top:123.00px;font-size:9.7px;font-weight:400;color:#141414;transform:scale(0.9716,1.0000);-webkit-text-stroke:0.2px #141414;">Agrafeuse métal 20 feuilles</span>
<span class="t" style="left:728.44px;top:123.00px;font-size:9.7px;font-weight:400;color:#141414;transform:scale(0.9748,1.0000);-webkit-text-stroke:0.2px #141414;">1.00</span>
<span class="t" style="left:780.96px;top:123.00px;font-size:9.7px;font-weight:400;color:#141414;transform:scale(0.8736,1.0000);-webkit-text-stroke:0.2px #141414;">900,00 Da</span>
<span class="t" style="left:872.26px;top:123.00px;font-size:9.7px;font-weight:400;color:#141414;transform:scale(0.8849,1.0000);-webkit-text-stroke:0.2px #141414;">909,00 Da</span>
<span class="t" style="left:964.43px;top:123.00px;font-size:9.7px;font-weight:400;color:#141414;transform:scale(0.8810,1.0000);-webkit-text-stroke:0.2px #141414;">450,00 Da</span>
<span class="t" style="left:1048.74px;top:123.00px;font-size:9.7px;font-weight:400;color:#141414;transform:scale(0.8869,1.0000);-webkit-text-stroke:0.2px #141414;">06-11-2025</span>
<span class="t" style="left:1148.23px;top:123.00px;font-size:9.7px;font-weight:400;color:#141414;transform:scale(0.9645,1.0000);-webkit-text-stroke:0.2px #141414;">65</span>
<span class="t" style="left:1165.27px;top:123.00px;font-size:9.7px;font-weight:400;color:#141414;transform:scale(0.8518,1.0000);-webkit-text-stroke:0.2px #141414;">SARL WEPRO VETT CONFECTION</span>
<span class="t" style="left:1316.00px;top:123.00px;font-size:9.7px;font-weight:400;color:#141414;transform:scale(1.0031,1.0000);-webkit-text-stroke:0.2px #141414;">Administrateur</span>
<span class="t" style="left:215.05px;top:145.00px;font-size:9.7px;font-weight:400;color:#141414;transform:scale(0.9680,1.0000);-webkit-text-stroke:0.2px #141414;">Bloc-notes A5 100 pages</span>
<span class="t" style="left:729.66px;top:145.00px;font-size:9.7px;font-weight:400;color:#141414;transform:scale(0.9086,1.0000);-webkit-text-stroke:0.2px #141414;">5.00</span>
<span class="t" style="left:780.13px;top:145.00px;font-size:9.7px;font-weight:400;color:#141414;transform:scale(0.8922,1.0000);-webkit-text-stroke:0.2px #141414;">120,00 Da</span>
<span class="t" style="left:872.10px;top:145.00px;font-size:9.7px;font-weight:400;color:#141414;transform:scale(0.8883,1.0000);-webkit-text-stroke:0.2px #141414;">606,00 Da</span>
<span class="t" style="left:973.74px;top:145.00px;font-size:9.7px;font-weight:400;color:#141414;transform:scale(0.8867,1.0000);-webkit-text-stroke:0.2px #141414;">0,00 Da</span>
<span class="t" style="left:1048.74px;top:145.00px;font-size:9.7px;font-weight:400;color:#141414;transform:scale(0.8869,1.0000);-webkit-text-stroke:0.2px #141414;">06-11-2025</span>
<span class="t" style="left:1148.23px;top:145.00px;font-size:9.7px;font-weight:400;color:#141414;transform:scale(0.9645,1.0000);-webkit-text-stroke:0.2px #141414;">65</span>
<span class="t" style="left:1165.27px;top:145.00px;font-size:9.7px;font-weight:400;color:#141414;transform:scale(0.8518,1.0000);-webkit-text-stroke:0.2px #141414;">SARL WEPRO VETT CONFECTION</span>
<span class="t" style="left:1316.00px;top:145.00px;font-size:9.7px;font-weight:400;color:#141414;transform:scale(1.0031,1.0000);-webkit-text-stroke:0.2px #141414;">Administrateur</span>
<span class="t" style="left:215.31px;top:167.00px;font-size:9.7px;font-weight:400;color:#141414;transform:scale(1.0075,1.0000);-webkit-text-stroke:0.2px #141414;">Corbeille à courrier plastique</span>
<span class="t" style="left:728.44px;top:167.00px;font-size:9.7px;font-weight:400;color:#141414;transform:scale(0.9748,1.0000);-webkit-text-stroke:0.2px #141414;">1.00</span>
<span class="t" style="left:780.39px;top:167.00px;font-size:9.7px;font-weight:400;color:#141414;transform:scale(0.8864,1.0000);-webkit-text-stroke:0.2px #141414;">850,00 Da</span>
<span class="t" style="left:872.19px;top:167.00px;font-size:9.7px;font-weight:400;color:#141414;transform:scale(0.8864,1.0000);-webkit-text-stroke:0.2px #141414;">858,50 Da</span>
<span class="t" style="left:964.43px;top:167.00px;font-size:9.7px;font-weight:400;color:#141414;transform:scale(0.8810,1.0000);-webkit-text-stroke:0.2px #141414;">450,00 Da</span>
<span class="t" style="left:1048.74px;top:167.00px;font-size:9.7px;font-weight:400;color:#141414;transform:scale(0.8869,1.0000);-webkit-text-stroke:0.2px #141414;">06-11-2025</span>
<span class="t" style="left:1148.23px;top:167.00px;font-size:9.7px;font-weight:400;color:#141414;transform:scale(0.9645,1.0000);-webkit-text-stroke:0.2px #141414;">65</span>
<span class="t" style="left:1165.27px;top:167.00px;font-size:9.7px;font-weight:400;color:#141414;transform:scale(0.8518,1.0000);-webkit-text-stroke:0.2px #141414;">SARL WEPRO VETT CONFECTION</span>
<span class="t" style="left:1316.00px;top:167.00px;font-size:9.7px;font-weight:400;color:#141414;transform:scale(1.0031,1.0000);-webkit-text-stroke:0.2px #141414;">Administrateur</span>
<span class="t" style="left:215.32px;top:190.00px;font-size:9.7px;font-weight:400;color:#141414;transform:scale(0.9930,1.0000);-webkit-text-stroke:0.2px #141414;">Carte de visite recto-verso 350g</span>
<span class="t" style="left:728.44px;top:190.00px;font-size:9.7px;font-weight:400;color:#141414;transform:scale(0.9748,1.0000);-webkit-text-stroke:0.2px #141414;">1.00</span>
<span class="t" style="left:773.08px;top:190.00px;font-size:9.7px;font-weight:400;color:#141414;transform:scale(0.8890,1.0000);-webkit-text-stroke:0.2px #141414;">2 500,00 Da</span>
<span class="t" style="left:864.88px;top:190.00px;font-size:9.7px;font-weight:400;color:#141414;transform:scale(0.8890,1.0000);-webkit-text-stroke:0.2px #141414;">2 525,00 Da</span>
<span class="t" style="left:956.88px;top:190.00px;font-size:9.7px;font-weight:400;color:#141414;transform:scale(0.8890,1.0000);-webkit-text-stroke:0.2px #141414;">2 100,00 Da</span>
<span class="t" style="left:1048.74px;top:190.00px;font-size:9.7px;font-weight:400;color:#141414;transform:scale(0.8869,1.0000);-webkit-text-stroke:0.2px #141414;">06-11-2025</span>
<span class="t" style="left:1148.23px;top:190.00px;font-size:9.7px;font-weight:400;color:#141414;transform:scale(0.9645,1.0000);-webkit-text-stroke:0.2px #141414;">65</span>
<span class="t" style="left:1165.27px;top:190.00px;font-size:9.7px;font-weight:400;color:#141414;transform:scale(0.8518,1.0000);-webkit-text-stroke:0.2px #141414;">SARL WEPRO VETT CONFECTION</span>
<span class="t" style="left:1316.00px;top:190.00px;font-size:9.7px;font-weight:400;color:#141414;transform:scale(1.0031,1.0000);-webkit-text-stroke:0.2px #141414;">Administrateur</span>
<span class="t" style="left:215.00px;top:212.00px;font-size:9.7px;font-weight:400;color:#141414;transform:scale(1.0255,1.0000);-webkit-text-stroke:0.2px #141414;">Marqueur indélébile noir</span>
<span class="t" style="left:729.57px;top:212.00px;font-size:9.7px;font-weight:400;color:#141414;transform:scale(0.9135,1.0000);-webkit-text-stroke:0.2px #141414;">2.00</span>
<span class="t" style="left:780.30px;top:212.00px;font-size:9.7px;font-weight:400;color:#141414;transform:scale(0.8883,1.0000);-webkit-text-stroke:0.2px #141414;">250,00 Da</span>
<span class="t" style="left:872.19px;top:212.00px;font-size:9.7px;font-weight:400;color:#141414;transform:scale(0.8864,1.0000);-webkit-text-stroke:0.2px #141414;">505,00 Da</span>
<span class="t" style="left:964.10px;top:212.00px;font-size:9.7px;font-weight:400;color:#141414;transform:scale(0.8883,1.0000);-webkit-text-stroke:0.2px #141414;">260,00 Da</span>
<span class="t" style="left:1048.74px;top:212.00px;font-size:9.7px;font-weight:400;color:#141414;transform:scale(0.8869,1.0000);-webkit-text-stroke:0.2px #141414;">06-11-2025</span>
<span class="t" style="left:1148.23px;top:212.00px;font-size:9.7px;font-weight:400;color:#141414;transform:scale(0.9645,1.0000);-webkit-text-stroke:0.2px #141414;">65</span>
<span class="t" style="left:1165.27px;top:212.00px;font-size:9.7px;font-weight:400;color:#141414;transform:scale(0.8518,1.0000);-webkit-text-stroke:0.2px #141414;">SARL WEPRO VETT CONFECTION</span>
<span class="t" style="left:1316.00px;top:212.00px;font-size:9.7px;font-weight:400;color:#141414;transform:scale(1.0031,1.0000);-webkit-text-stroke:0.2px #141414;">Administrateur</span>
<span class="t" style="left:215.61px;top:235.00px;font-size:9.7px;font-weight:400;color:#141414;transform:scale(0.9988,1.0000);-webkit-text-stroke:0.2px #141414;">Tampon dateur automatique</span>
<span class="t" style="left:728.44px;top:235.00px;font-size:9.7px;font-weight:400;color:#141414;transform:scale(0.9748,1.0000);-webkit-text-stroke:0.2px #141414;">1.00</span>
<span class="t" style="left:772.91px;top:235.00px;font-size:9.7px;font-weight:400;color:#141414;transform:scale(0.8923,1.0000);-webkit-text-stroke:0.2px #141414;">1 400,00 Da</span>
<span class="t" style="left:864.71px;top:235.00px;font-size:9.7px;font-weight:400;color:#141414;transform:scale(0.8923,1.0000);-webkit-text-stroke:0.2px #141414;">1 414,00 Da</span>
<span class="t" style="left:964.10px;top:235.00px;font-size:9.7px;font-weight:400;color:#141414;transform:scale(0.8883,1.0000);-webkit-text-stroke:0.2px #141414;">650,00 Da</span>
<span class="t" style="left:1048.74px;top:235.00px;font-size:9.7px;font-weight:400;color:#141414;transform:scale(0.8869,1.0000);-webkit-text-stroke:0.2px #141414;">06-11-2025</span>
<span class="t" style="left:1148.23px;top:235.00px;font-size:9.7px;font-weight:400;color:#141414;transform:scale(0.9645,1.0000);-webkit-text-stroke:0.2px #141414;">65</span>
<span class="t" style="left:1165.27px;top:235.00px;font-size:9.7px;font-weight:400;color:#141414;transform:scale(0.8518,1.0000);-webkit-text-stroke:0.2px #141414;">SARL WEPRO VETT CONFECTION</span>
<span class="t" style="left:1316.00px;top:235.00px;font-size:9.7px;font-weight:400;color:#141414;transform:scale(1.0031,1.0000);-webkit-text-stroke:0.2px #141414;">Administrateur</span>
<span class="t" style="left:215.42px;top:257.00px;font-size:9.7px;font-weight:400;color:#141414;transform:scale(0.9862,1.0000);-webkit-text-stroke:0.2px #141414;">Stylo bille bleu BIC</span>
<span class="t" style="left:724.56px;top:257.00px;font-size:9.7px;font-weight:400;color:#141414;transform:scale(0.9173,1.0000);-webkit-text-stroke:0.2px #141414;">20.00</span>
<span class="t" style="left:785.34px;top:257.00px;font-size:9.7px;font-weight:400;color:#141414;transform:scale(0.8820,1.0000);-webkit-text-stroke:0.2px #141414;">35,00 Da</span>
<span class="t" style="left:872.88px;top:257.00px;font-size:9.7px;font-weight:400;color:#141414;transform:scale(0.8710,1.0000);-webkit-text-stroke:0.2px #141414;">707,00 Da</span>
<span class="t" style="left:973.74px;top:257.00px;font-size:9.7px;font-weight:400;color:#141414;transform:scale(0.8867,1.0000);-webkit-text-stroke:0.2px #141414;">0,00 Da</span>
<span class="t" style="left:1048.74px;top:257.00px;font-size:9.7px;font-weight:400;color:#141414;transform:scale(0.8869,1.0000);-webkit-text-stroke:0.2px #141414;">06-11-2025</span>
<span class="t" style="left:1148.23px;top:257.00px;font-size:9.7px;font-weight:400;color:#141414;transform:scale(0.9645,1.0000);-webkit-text-stroke:0.2px #141414;">65</span>
<span class="t" style="left:1165.27px;top:257.00px;font-size:9.7px;font-weight:400;color:#141414;transform:scale(0.8518,1.0000);-webkit-text-stroke:0.2px #141414;">SARL WEPRO VETT CONFECTION</span>
<span class="t" style="left:1316.00px;top:257.00px;font-size:9.7px;font-weight:400;color:#141414;transform:scale(1.0031,1.0000);-webkit-text-stroke:0.2px #141414;">Administrateur</span>
<span class="t" style="left:215.02px;top:279.00px;font-size:9.7px;font-weight:400;color:#141414;-webkit-text-stroke:0.2px #141414;">Rouleau scotch transparent 66m</span>
<span class="t" style="left:729.13px;top:279.00px;font-size:9.7px;font-weight:400;color:#141414;transform:scale(0.9376,1.0000);-webkit-text-stroke:0.2px #141414;">3.00</span>
<span class="t" style="left:773.43px;top:279.00px;font-size:9.7px;font-weight:400;color:#141414;transform:scale(0.8824,1.0000);-webkit-text-stroke:0.2px #141414;">4 550,00 Da</span>
<span class="t" style="left:859.89px;top:279.00px;font-size:9.7px;font-weight:400;color:#141414;transform:scale(0.8923,1.0000);-webkit-text-stroke:0.2px #141414;">13 786,50 Da</span>
<span class="t" style="left:956.35px;top:279.00px;font-size:9.7px;font-weight:400;color:#141414;transform:scale(0.8990,1.0000);-webkit-text-stroke:0.2px #141414;">5 700,00 Da</span>
<span class="t" style="left:1048.74px;top:279.00px;font-size:9.7px;font-weight:400;color:#141414;transform:scale(0.8869,1.0000);-webkit-text-stroke:0.2px #141414;">06-11-2025</span>
<span class="t" style="left:1148.23px;top:279.00px;font-size:9.7px;font-weight:400;color:#141414;transform:scale(0.9645,1.0000);-webkit-text-stroke:0.2px #141414;">65</span>
<span class="t" style="left:1165.27px;top:279.00px;font-size:9.7px;font-weight:400;color:#141414;transform:scale(0.8518,1.0000);-webkit-text-stroke:0.2px #141414;">SARL WEPRO VETT CONFECTION</span>
<span class="t" style="left:1316.00px;top:279.00px;font-size:9.7px;font-weight:400;color:#141414;transform:scale(1.0031,1.0000);-webkit-text-stroke:0.2px #141414;">Administrateur</span>
<span class="t" style="left:162.15px;top:634.00px;font-size:9.7px;font-weight:400;color:#141414;transform:scale(0.9027,1.0000);-webkit-text-stroke:0.2px #141414;">Somme</span>
<span class="t" style="left:724.03px;top:634.00px;font-size:9.7px;font-weight:400;color:#141414;transform:scale(0.9394,1.0000);-webkit-text-stroke:0.2px #141414;">34.00</span>
<span class="t" style="left:860.16px;top:634.00px;font-size:9.7px;font-weight:400;color:#141414;transform:scale(0.8987,1.0000);-webkit-text-stroke:0.2px #141414;">21 311,00 Da</span>
<span class="t" style="left:956.45px;top:634.00px;font-size:9.7px;font-weight:400;color:#141414;transform:scale(0.8971,1.0000);-webkit-text-stroke:0.2px #141414;">9 610,00 Da</span>
<span class="t" style="left:413.14px;top:667.00px;font-size:9.6px;font-weight:700;color:#333;transform:scale(0.9285,1.0000);">CHIFFRE D'AFFAIRE</span>
<span class="t" style="left:566.46px;top:667.00px;font-size:9.6px;font-weight:700;color:#333;transform:scale(0.9313,1.0000);">BENEFICES</span>
<span class="t" style="left:701.34px;top:667.00px;font-size:9.6px;font-weight:700;color:#333;transform:scale(0.9636,1.0000);">Remise C</span>
<span class="t" style="left:808.84px;top:669.00px;font-size:9.6px;font-weight:700;color:#333;transform:scale(0.9638,1.0000);">Remise F</span>
<span class="t" style="left:932.24px;top:667.00px;font-size:9.6px;font-weight:700;color:#333;transform:scale(0.9500,1.0000);">CHARGES</span>
<span class="t" style="left:1083.97px;top:667.00px;font-size:9.6px;font-weight:700;color:#333;transform:scale(0.9266,1.0000);">BENEFICE NET</span>
<span class="t" style="left:466.33px;top:684.00px;font-size:13px;font-weight:700;color:#222;transform:scale(0.9400,1.0000);">21 311,00 DA</span>
<span class="t" style="left:623.53px;top:684.00px;font-size:13px;font-weight:700;color:#222;transform:scale(0.9431,1.0000);">9 610,00 DA</span>
<span class="t" style="left:756.43px;top:685.00px;font-size:13px;font-weight:700;color:#222;transform:scale(0.9423,1.0000);">0,00 DA</span>
<span class="t" style="left:863.63px;top:686.00px;font-size:13px;font-weight:700;color:#222;transform:scale(0.9423,1.0000);">0,00 DA</span>
<span class="t" style="left:1011.04px;top:684.00px;font-size:13px;font-weight:700;color:#222;transform:scale(0.9274,1.0000);">0,00 DA</span>
<span class="t" style="left:1144.83px;top:684.00px;font-size:13px;font-weight:700;color:#222;transform:scale(0.9362,1.0000);">9 610,00 DA</span>
</body></html>
